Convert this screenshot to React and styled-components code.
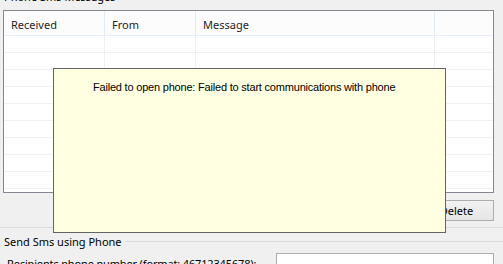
import React from "react";
import styled, { createGlobalStyle } from "styled-components";

const Global = createGlobalStyle`
  html, body { margin: 0; padding: 0; background: #f0f0f0; overflow: hidden; }
  #root { width: 503px; height: 264px; overflow: hidden; position: relative; }
`;

const Page = styled.div`
  width: 503px;
  height: 264px;
  position: relative;
  background: #f0f0f0;
  font-family: "Noto Sans", "Open Sans", sans-serif;
  font-size: 11px;
  color: #000;
  overflow: hidden;
`;

const MessagesGroup = styled.section`
  display: flex;
  flex-direction: column;
  margin-top: -11px;
  padding: 0 9px 0 3px;
  border-bottom: 1px solid #dadada;
  height: 239px;
  box-sizing: border-box;
`;

const GroupTitle = styled.div`
  height: 21px;
  line-height: 16px;
  padding-left: 1px;
  white-space: nowrap;
`;

const Table = styled.div`
  border: 1px solid #828790;
  background: #fff;
  height: 183px;
  box-sizing: border-box;
  display: flex;
  flex-direction: column;
`;

const cols = "101px 91px 239px 1fr";

const HeaderRow = styled.div`
  display: grid;
  grid-template-columns: ${cols};
  height: 25px;
  box-sizing: border-box;
  border-bottom: 1px solid #e6eef7;
  background: #fcfcfc;
`;

const HeaderCell = styled.div`
  border-right: ${(p) => (p.$last ? "none" : "1px solid #e3ebf5")};
  padding: 6px 0 0 7px;
  line-height: 16px;
  color: #1e1e1e;
  white-space: nowrap;
`;

const Row = styled.div`
  display: grid;
  grid-template-columns: ${cols};
  height: 17px;
  box-sizing: border-box;
  border-bottom: 1px solid #f0f0f0;
`;

const Cell = styled.div`
  border-right: ${(p) => (p.$last ? "none" : "1px solid #f0f0f0")};
`;

const ButtonRow = styled.div`
  display: flex;
  justify-content: flex-end;
  padding-top: 7px;
`;

const Button = styled.button`
  width: 75px;
  height: 21px;
  box-sizing: border-box;
  border: 1px solid #adadad;
  background: linear-gradient(#f2f2f2, #e5e5e5);
  font-family: "Noto Sans", "Open Sans", sans-serif;
  font-size: 11px;
  color: #000;
  padding: 0;
  line-height: 18px;
`;

const SendGroup = styled.section`
  padding: 5px 9px 0 4px;
`;

const SendTitle = styled.div`
  display: flex;
  align-items: center;
  gap: 3px;
  height: 16px;
  white-space: nowrap;
  &::after {
    content: "";
    flex: 1;
    height: 1px;
    background: #dadada;
    margin-right: -9px;
  }
`;

const FieldRow = styled.div`
  display: flex;
  align-items: flex-start;
  justify-content: space-between;
  padding-left: 3px;
  margin-top: 5px;
`;

const Label = styled.span`
  line-height: 16px;
  margin-top: 2px;
  letter-spacing: -0.15px;
  white-space: nowrap;
`;

const Input = styled.input`
  width: 218px;
  height: 20px;
  box-sizing: border-box;
  border: 1px solid #abadb3;
  background: #fff;
  margin: 0;
  margin-top: -1px;
  flex-shrink: 0;
`;

const Popup = styled.div`
  position: absolute;
  left: 53px;
  top: 68px;
  width: 393px;
  height: 165px;
  box-sizing: border-box;
  border: 1px solid #646464;
  background: #ffffe1;
  font-family: "Liberation Sans", Arial, sans-serif;
  font-size: 11px;
  letter-spacing: -0.2px;
  color: #000;
  padding: 12px 0 0 39px;
  line-height: 13px;
  white-space: nowrap;
`;

export default function App() {
  const rows = Array.from({ length: 9 });
  return (
    <Page>
      <Global />
      <MessagesGroup>
        <GroupTitle>Phone Sms Messages</GroupTitle>
        <Table>
          <HeaderRow>
            <HeaderCell>Received</HeaderCell>
            <HeaderCell>From</HeaderCell>
            <HeaderCell>Message</HeaderCell>
            <HeaderCell $last />
          </HeaderRow>
          {rows.map((_, i) => (
            <Row key={i}>
              <Cell />
              <Cell />
              <Cell />
              <Cell $last />
            </Row>
          ))}
        </Table>
        <ButtonRow>
          <Button>Delete</Button>
        </ButtonRow>
      </MessagesGroup>
      <SendGroup>
        <SendTitle>Send Sms using Phone</SendTitle>
        <FieldRow>
          <Label>Recipients phone number (format: 46712345678):</Label>
          <Input />
        </FieldRow>
      </SendGroup>
      <Popup>Failed to open phone: Failed to start communications with phone</Popup>
    </Page>
  );
}
